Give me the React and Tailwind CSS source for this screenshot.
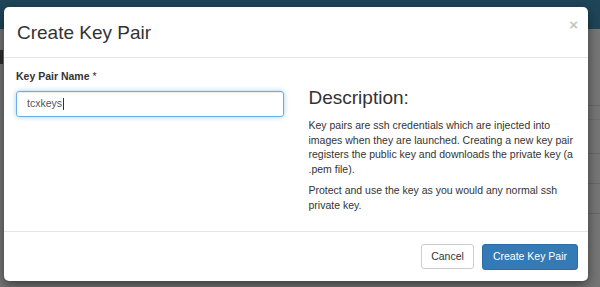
import React from 'react';

const font = { fontFamily: '"Liberation Sans", Arial, Helvetica, sans-serif' };

const App = () => {
  return (
    <div
      className="relative w-[600px] h-[287px] overflow-hidden bg-[#767676] text-[#333333]"
      style={font}
    >
      {/* dimmed page behind the modal */}
      <div className="absolute inset-x-0 top-0 h-[29px] bg-[#1f4558]" />
      <div className="absolute left-0 top-[50px] w-[3px] h-[14px] bg-[#2e2e2e]" />
      <div className="absolute right-0 top-[105px] w-[14px] h-px bg-[#686868]" />
      <div className="absolute right-0 top-[119px] w-[14px] h-px bg-[#6c6c6c]" />
      <div className="absolute right-0 top-[153px] w-[14px] h-px bg-[#686868]" />
      <div className="absolute right-0 top-[183px] w-[14px] h-px bg-[#686868]" />
      <div className="absolute right-0 top-[213px] w-[14px] h-px bg-[#686868]" />

      {/* modal */}
      <div className="absolute left-[4px] top-[7px] w-[584px] h-[274px] flex flex-col rounded-[5px] bg-white shadow-[0_4px_12px_rgba(0,0,0,0.5)]">
        <div className="h-[51px] shrink-0 flex items-center justify-between pl-[13px] pr-[10px] border-b border-[#e5e5e5]">
          <h4 className="text-[19px] leading-none text-[#333333]">Create Key Pair</h4>
          <span className="text-[15px] font-bold leading-none text-[#c4c4c4] -mt-[16px]">×</span>
        </div>

        <div className="flex-1 grid grid-cols-2 gap-[25px] px-[12px] pt-[13px]">
          <div>
            <label className="block text-[10.5px] font-bold leading-none mb-[9px]">
              Key Pair Name <span className="font-normal">*</span>
            </label>
            <div className="h-[26px] flex items-center px-[10px] rounded-[3px] border border-[#66afe9] shadow-[inset_0_1px_1px_rgba(0,0,0,0.075),0_0_5px_rgba(102,175,233,0.6)] text-[10.5px] text-[#555555]">
              tcxkeys
              <span className="inline-block w-px h-[12px] bg-[#333333] ml-px" />
            </div>
          </div>
          <div className="pt-[17px]">
            <h3 className="text-[19px] leading-none mb-[11px]">Description:</h3>
            <p className="text-[10.5px] leading-[14.5px] mb-[7px]">
              Key pairs are ssh credentials which are injected into images when they are launched. Creating a new key pair registers the public key and downloads the private key (a .pem file).
            </p>
            <p className="text-[10.5px] leading-[14.5px]">
              Protect and use the key as you would any normal ssh private key.
            </p>
          </div>
        </div>

        <div className="h-[50px] shrink-0 flex items-center justify-end gap-[8px] pr-[10px] border-t border-[#e5e5e5]">
          <button className="h-[25px] px-[9px] rounded-[3px] border border-[#cccccc] bg-white text-[10.5px] text-[#333333]">
            Cancel
          </button>
          <button className="h-[26px] px-[10px] rounded-[3px] border border-[#2e6da4] bg-[#337ab7] text-[10.5px] text-white">
            Create Key Pair
          </button>
        </div>
      </div>
    </div>
  );
};

export default App;
